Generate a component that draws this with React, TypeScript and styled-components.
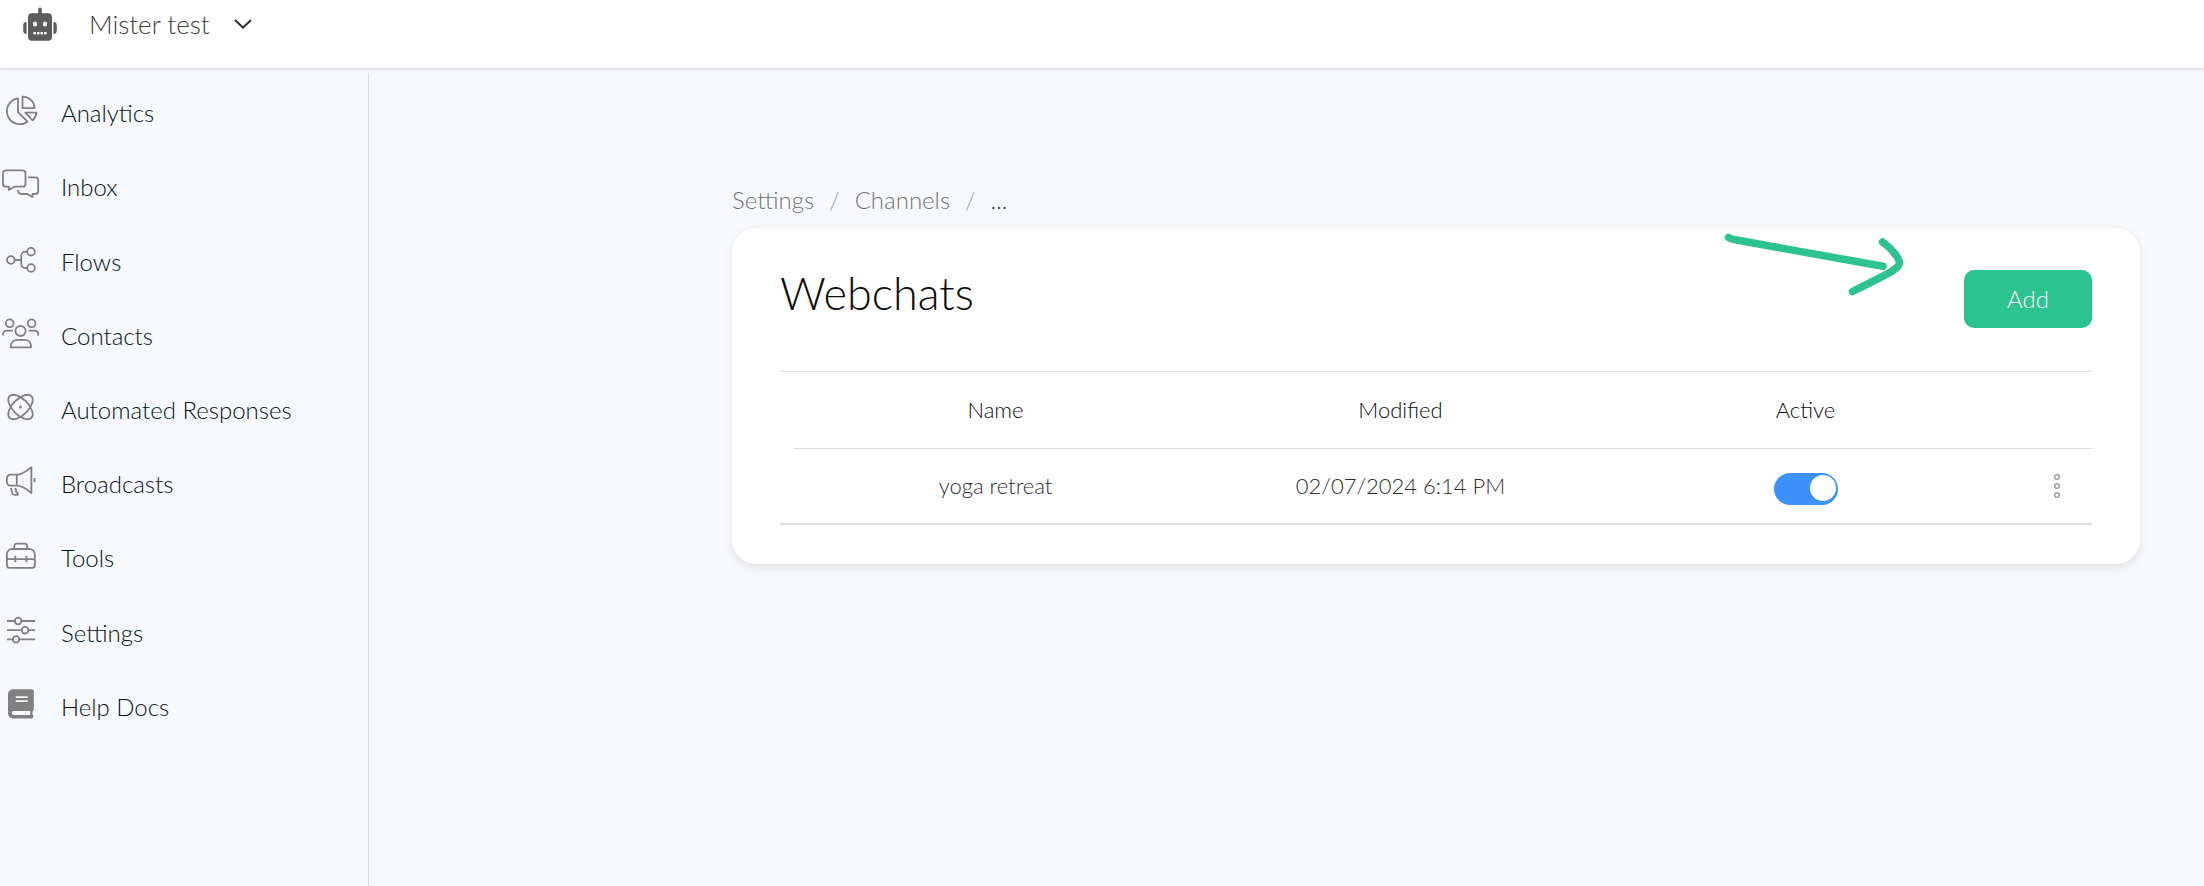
import React, { useState } from "react";
import styled, { createGlobalStyle } from "styled-components";

const GlobalStyle = createGlobalStyle`
  *, *::before, *::after { box-sizing: border-box; }
  body {
    margin: 0;
    background: #f8f9fc;
    font-family: Lato, "Liberation Sans", sans-serif;
    font-weight: 300;
    font-size: 24px;
    line-height: 32px;
    color: #0c0c0e;
  }
  button { font: inherit; cursor: pointer; }
  a { color: inherit; text-decoration: none; }
`;

const Page = styled.div`
  display: flex;
  flex-direction: column;
  min-height: 100vh;
`;

const TopBar = styled.header`
  display: flex;
  align-items: flex-start;
  height: 68px;
  padding: 4px 23px;
  background: #ffffff;
  box-shadow: 0 2px 2px rgba(0, 0, 0, 0.1);
`;

const BotLogo = styled.svg`
  width: 34px;
  height: 40px;
  fill: #5c5c5c;
`;

const BotPicker = styled.button`
  display: flex;
  align-items: center;
  gap: 24px;
  margin-left: 32px;
  padding: 4px 0;
  border: 0;
  background: none;
  color: #3c3d3f;
  font-size: 26px;
`;

const Chevron = styled.svg`
  width: 18px;
  height: 12px;
  fill: none;
  stroke: #2b2b2b;
  stroke-width: 2;
`;

const Body = styled.div`
  display: flex;
  flex: 1;
  padding-top: 5px;
`;

const Sidebar = styled.nav`
  flex: 0 0 369px;
  border-right: 1px solid #dcdde1;
`;

const NavList = styled.ul`
  display: grid;
  grid-auto-rows: 1fr;
  height: 668px;
  margin: 0;
  padding: 0;
  list-style: none;
`;

const NavLink = styled.a`
  display: flex;
  align-items: center;
  gap: 20px;
  height: 100%;
  color: #06121d;
`;

const NavIcon = styled.svg`
  flex: none;
  width: 41px;
  height: 40px;
  fill: none;
  stroke: #808080;
  stroke-width: 1.8;
  stroke-linejoin: round;
`;

const NavLabel = styled.span`
  padding-top: 6px;
`;

const Main = styled.main`
  flex: 1;
  min-width: 0;
  padding: 111px 64px 0 363px;
`;

const Crumbs = styled.ol`
  display: flex;
  gap: 15px;
  margin: 0 0 12px;
  padding: 0;
  list-style: none;
  color: #737373;
`;

const Crumb = styled.li`
  display: flex;
  gap: 15px;

  & + &::before {
    content: "/";
    color: #9a9ca8;
  }
  &:last-child {
    color: #3a3b3e;
  }
`;

const Card = styled.section`
  position: relative;
  padding: 42px 48px 39px;
  border-radius: 24px;
  background: #ffffff;
  box-shadow: 0 3px 8px rgba(0, 0, 0, 0.1);
`;

const CardHead = styled.div`
  display: flex;
  justify-content: space-between;
  align-items: flex-start;
  padding-bottom: 43px;
`;

const Title = styled.h1`
  margin: 0;
  font-size: 45px;
  line-height: 46px;
  font-weight: 300;
`;

const AddButton = styled.button`
  width: 128px;
  height: 58px;
  border: 0;
  border-radius: 10px;
  background: #2cc391;
  color: #ffffff;
`;

const Arrow = styled.svg`
  position: absolute;
  top: 2px;
  right: 230px;
  width: 190px;
  height: 70px;
  fill: none;
  stroke: #2cc391;
  stroke-width: 7.5;
  stroke-linecap: round;
  stroke-linejoin: round;
  pointer-events: none;
`;

const Table = styled.table`
  width: 100%;
  table-layout: fixed;
  border-spacing: 0;
  border-top: 1px solid #dddddf;
  border-bottom: 2px solid #dddee1;
  font-size: 22px;
  text-align: center;
`;

const Col = styled.col<{ $width?: number }>`
  width: ${({ $width }) => ($width ? `${$width}px` : "auto")};
`;

const HeadCell = styled.th<{ $lined?: boolean }>`
  height: 77px;
  padding: 0;
  border-bottom: 1px solid ${({ $lined = true }) => ($lined ? "#dddddf" : "transparent")};
  font-weight: 300;
`;

const Cell = styled.td`
  height: 74px;
  padding: 0;
  color: #2e2e30;
`;

const Switch = styled.input`
  appearance: none;
  display: block;
  width: 64px;
  height: 32px;
  margin: 6px auto 0;
  padding: 2px;
  border-radius: 16px;
  background: #c4c7cf;
  cursor: pointer;

  &::before {
    content: "";
    display: block;
    width: 26px;
    height: 26px;
    border-radius: 50%;
    background: #ffffff;
  }
  &:checked {
    background: #3d92f9;
  }
  &:checked::before {
    margin-left: auto;
  }
`;

const MenuButton = styled.button`
  display: block;
  margin: 0 20px 0 auto;
  padding: 0;
  border: 0;
  background: none;
`;

const Dots = styled.svg`
  display: block;
  width: 30px;
  height: 30px;
  fill: none;
  stroke: #a3a3a3;
  stroke-width: 1.6;
`;

const navItems: { label: string; icon: React.ReactNode }[] = [
  {
    label: "Analytics",
    icon: (
      <>
        <path d="M18 8.3A13 13 0 1 0 27.5 31.7L18 22.2Z" />
        <path d="M22.5 6.6V18.2H34.5C34.5 11.5 29 6.6 22.5 6.6Z" />
        <path d="M25.3 22.7H36.5Q36 27.2 32.6 30.3Z" />
      </>
    ),
  },
  {
    label: "Inbox",
    icon: (
      <>
        <path d="M6 6.3H22.5a3 3 0 0 1 3 3V19.7a3 3 0 0 1-3 3H14.5L8.9 26V22.7H6a3 3 0 0 1-3-3V9.3a3 3 0 0 1 3-3Z" />
        <path d="M28 13.3H35.2a3 3 0 0 1 3 3V27a3 3 0 0 1-3 3H32.5V33L27 30H21.5Q18 30 18 26" />
      </>
    ),
  },
  {
    label: "Flows",
    icon: (
      <>
        <circle cx="10.8" cy="21" r="3.8" />
        <circle cx="31" cy="12.7" r="3.8" />
        <circle cx="31" cy="29" r="3.8" />
        <path d="M14.7 21H21.3M27 12.7H25.3a4 4 0 0 0-4 4V25a4 4 0 0 0 4 4H27" />
      </>
    ),
  },
  {
    label: "Contacts",
    icon: (
      <>
        <circle cx="20.5" cy="17.9" r="5.1" />
        <circle cx="9.7" cy="10.3" r="3.9" />
        <circle cx="31.6" cy="10.3" r="3.9" />
        <path d="M3 22.5V21.3A3.7 3.7 0 0 1 6.7 17.7H13M28.5 17.7H34.6A3.7 3.7 0 0 1 38.2 21.3V22.5" />
        <path d="M10.8 34.4V33C10.8 29 14 26.8 17 26.8H24.3C28 26.8 31 29 31 33V34.4Z" />
      </>
    ),
  },
  {
    label: "Automated Responses",
    icon: (
      <>
        <ellipse cx="20.5" cy="20" rx="15.4" ry="7.8" transform="rotate(45 20.5 20)" />
        <ellipse cx="20.5" cy="20" rx="15.4" ry="7.8" transform="rotate(-45 20.5 20)" />
        <circle cx="20.5" cy="20" r="0.6" />
      </>
    ),
  },
  {
    label: "Broadcasts",
    icon: (
      <>
        <path d="M16.8 13.7H10.5a3.6 3.6 0 0 0-3.6 3.6V21a3.6 3.6 0 0 0 3.6 3.6H16.8Z" />
        <path d="M16.8 13.7C23 13.7 27.5 9 31.4 6.3V32C27.5 29 23 24.6 16.8 24.6" />
        <path d="M10.9 27L12.3 32Q12.9 33.8 14.5 33.8H17.8V32.2Q16.2 31.6 15.9 30L15.5 27" />
        <path d="M34.5 17V21.2" />
      </>
    ),
  },
  {
    label: "Tools",
    icon: (
      <>
        <path d="M14.3 14V11a2.4 2.4 0 0 1 2.4-2.4H24.8a2.4 2.4 0 0 1 2.4 2.4V14" />
        <path d="M12 14H29.5A5.3 5.3 0 0 1 34.8 19.3V30.3A2.6 2.6 0 0 1 32.2 32.9H9.5A2.6 2.6 0 0 1 6.9 30.3V19.3A5.3 5.3 0 0 1 12 14ZM7 24.2H34.8M15.3 20.8V27.2M26.5 20.8V27.2" />
      </>
    ),
  },
  {
    label: "Settings",
    icon: (
      <>
        <path d="M7 11H14.8M21.4 11H35M7 20.2H21.8M28.4 20.2H35M7 29.4H12.8M19.4 29.4H35" />
        <circle cx="18.1" cy="11" r="3.3" />
        <circle cx="25.1" cy="20.2" r="3.3" />
        <circle cx="16.1" cy="29.4" r="3.3" />
      </>
    ),
  },
  {
    label: "Help Docs",
    icon: (
      <path
        fill="#808080"
        stroke="none"
        fillRule="evenodd"
        d="M13 5.3H31.8A2 2 0 0 1 33.8 7.3V25.3A2 2 0 0 1 32.5 27.2V30.8Q33.5 31.2 33.5 32.7A1.8 1.8 0 0 1 31.8 34.5H13A5 5 0 0 1 8 29.5V10.3A5 5 0 0 1 13 5.3ZM15.8 12.3V14H27.8V12.3ZM15.8 16.3V18H27.8V16.3ZM13.7 27A2 2 0 0 0 13.7 31H30.2V27Z"
      />
    ),
  },
];

const rows = [{ name: "yoga retreat", modified: "02/07/2024 6:14 PM" }];

export default function App() {
  const [active, setActive] = useState(true);

  return (
    <Page>
      <GlobalStyle />
      <TopBar>
        <BotLogo viewBox="0 0 34 40" aria-hidden="true">
          <rect x="15.2" y="3.5" width="3.6" height="8" rx="1.8" />
          <rect x="5" y="9.3" width="24" height="27.5" rx="4" />
          <path d="M3.6 18V30A3.4 3.4 0 0 1 0.2 26.6V21.4A3.4 3.4 0 0 1 3.6 18ZM30.4 18V30A3.4 3.4 0 0 0 33.8 26.6V21.4A3.4 3.4 0 0 0 30.4 18Z" />
          <g fill="#ffffff">
            <ellipse cx="12" cy="20" rx="2.1" ry="2.6" />
            <ellipse cx="22" cy="20" rx="2.1" ry="2.6" />
            <rect x="10.4" y="28" width="2.4" height="2.4" />
            <rect x="14" y="28" width="2.4" height="2.4" />
            <rect x="17.6" y="28" width="2.4" height="2.4" />
            <rect x="21.2" y="28" width="2.4" height="2.4" />
          </g>
        </BotLogo>
        <BotPicker type="button">
          Mister test
          <Chevron viewBox="0 0 18 12" aria-hidden="true">
            <path d="M1 2L9 9.6L17 2" />
          </Chevron>
        </BotPicker>
      </TopBar>
      <Body>
        <Sidebar aria-label="Main">
          <NavList>
            {navItems.map(({ label, icon }) => (
              <li key={label}>
                <NavLink href="#">
                  <NavIcon viewBox="0 0 41 40" aria-hidden="true">
                    {icon}
                  </NavIcon>
                  <NavLabel>{label}</NavLabel>
                </NavLink>
              </li>
            ))}
          </NavList>
        </Sidebar>
        <Main>
          <nav aria-label="Breadcrumb">
            <Crumbs>
              <Crumb>
                <a href="#">Settings</a>
              </Crumb>
              <Crumb>
                <a href="#">Channels</a>
              </Crumb>
              <Crumb>...</Crumb>
            </Crumbs>
          </nav>
          <Card>
            <CardHead>
              <Title>Webchats</Title>
              <AddButton type="button">Add</AddButton>
            </CardHead>
            <Table>
              <colgroup>
                <Col $width={13} />
                <Col />
                <Col />
                <Col />
                <Col $width={84} />
              </colgroup>
              <thead>
                <tr>
                  <HeadCell $lined={false} />
                  <HeadCell scope="col">Name</HeadCell>
                  <HeadCell scope="col">Modified</HeadCell>
                  <HeadCell scope="col">Active</HeadCell>
                  <HeadCell />
                </tr>
              </thead>
              <tbody>
                {rows.map((row) => (
                  <tr key={row.name}>
                    <Cell />
                    <Cell>{row.name}</Cell>
                    <Cell>{row.modified}</Cell>
                    <Cell>
                      <Switch
                        type="checkbox"
                        role="switch"
                        aria-label={`${row.name} active`}
                        checked={active}
                        onChange={(e) => setActive(e.target.checked)}
                      />
                    </Cell>
                    <Cell>
                      <MenuButton type="button" aria-label="More actions">
                        <Dots viewBox="0 0 30 30">
                          <circle cx="15" cy="6" r="2.3" />
                          <circle cx="15" cy="15" r="2.3" />
                          <circle cx="15" cy="24" r="2.3" />
                        </Dots>
                      </MenuButton>
                    </Cell>
                  </tr>
                ))}
              </tbody>
            </Table>
            <Arrow viewBox="0 0 190 70" aria-hidden="true">
              <path d="M8.5 7.5Q12 9.5 18 10.3L163 36.3" />
              <path d="M162.5 12Q176 22 179.5 32Q180 36 173 40.5Q165 45.5 132.5 61.5" />
            </Arrow>
          </Card>
        </Main>
      </Body>
    </Page>
  );
}
